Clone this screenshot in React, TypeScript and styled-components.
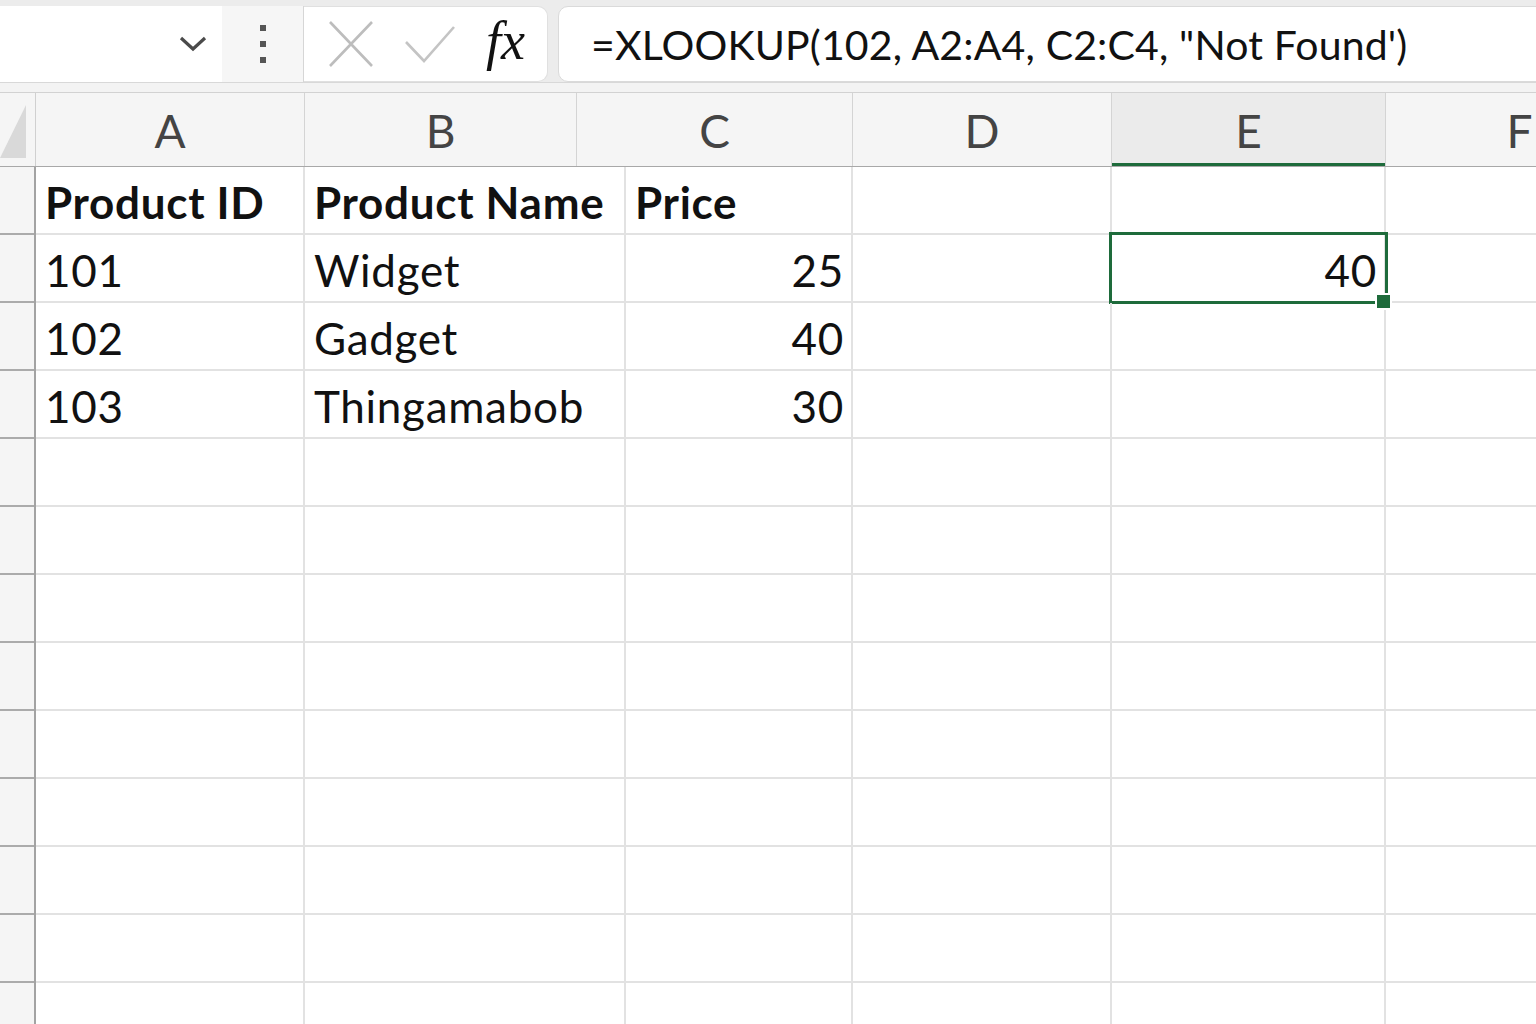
import styled, { createGlobalStyle } from 'styled-components';

const GlobalStyle = createGlobalStyle`
  html, body {
    margin: 0;
    padding: 0;
    background: #ffffff;
    overflow: hidden;
  }
  body {
    font-family: Lato, "Noto Sans", sans-serif;
  }
`;

const GREEN = '#1e6b3b';
const GRID = '#e2e2e2';

const Page = styled.div`
  width: 1536px;
  height: 1024px;
  overflow: hidden;
  display: flex;
  flex-direction: column;
  background: #fff;
`;

const Toolbar = styled.div`
  display: flex;
  flex-shrink: 0;
  height: 83px;
  padding-top: 6px;
  box-sizing: border-box;
  background: #ececec;
  border-bottom: 1px solid #d8d8d8;
`;

const NameBox = styled.div`
  width: 222px;
  background: #fff;
  display: flex;
  align-items: center;
  justify-content: flex-end;
  padding-right: 14px;
  box-sizing: border-box;
`;

const MoreButton = styled.div`
  width: 81px;
  background: #f6f6f6;
  border-right: 1px solid #d6d6d6;
  display: flex;
  align-items: center;
  justify-content: center;
`;

const FxGroup = styled.div`
  width: 244px;
  background: #fff;
  border: 1px solid #e0e0e0;
  border-left: none;
  border-radius: 0 10px 10px 0;
  display: flex;
  align-items: center;
  padding-left: 24px;
  gap: 30px;
  box-sizing: border-box;
`;

const FxLabel = styled.span`
  font-family: "Liberation Serif", serif;
  font-style: italic;
  font-size: 54px;
  color: #111;
  line-height: 1;
  padding-bottom: 6px;
`;

const FormulaBox = styled.div`
  flex: 1;
  margin-left: 10px;
  margin-right: -12px;
  background: #fff;
  border: 1px solid #dadada;
  border-radius: 10px;
  display: flex;
  align-items: center;
  padding-left: 32px;
  font-size: 41px;
  color: #111;
  letter-spacing: 0.15px;
  white-space: nowrap;
`;

const Band = styled.div`
  flex-shrink: 0;
  height: 9px;
  background: #f3f3f3;
  border-bottom: 1px solid #d2d2d2;
`;

const HeaderRow = styled.div`
  flex-shrink: 0;
  display: grid;
  grid-template-columns: 36px 269px 272px 276px 259px 274px 268px;
  height: 74px;
  background: #f5f5f5;
  border-bottom: 1px solid #a8a8a8;
  box-sizing: border-box;
`;

const Corner = styled.div`
  border-right: 1px solid #d0d0d0;
  display: flex;
  align-items: flex-end;
  padding-bottom: 8px;
`;

const ColHead = styled.div<{ $active?: boolean }>`
  display: flex;
  align-items: center;
  justify-content: center;
  font-size: 46px;
  font-weight: 400;
  color: #444;
  border-right: 1px solid #d4d4d4;
  background: ${(p) => (p.$active ? '#ebebeb' : 'transparent')};
  box-shadow: ${(p) => (p.$active ? `inset 0 -3px 0 ${GREEN}` : 'none')};
  padding-top: 2px;
`;

const Body = styled.div`
  display: flex;
  flex: 1;
  overflow: hidden;
`;

const RowHeads = styled.div`
  flex-shrink: 0;
  width: 36px;
  background: #f5f5f5;
  border-right: 2px solid #a3a3a3;
  box-sizing: border-box;
`;

const RowHead = styled.div`
  height: 68px;
  border-bottom: 2px solid #ababab;
  box-sizing: border-box;
`;

const CellGrid = styled.div`
  flex-shrink: 0;
  display: grid;
  grid-template-columns: 269px 321px 227px 259px 274px 268px;
  grid-auto-rows: 68px;
`;

const Cell = styled.div<{ $bold?: boolean; $num?: boolean; $selected?: boolean }>`
  position: relative;
  display: flex;
  align-items: center;
  justify-content: ${(p) => (p.$num ? 'flex-end' : 'flex-start')};
  padding: 4px ${(p) => (p.$num ? '7px' : '0')} 0 ${(p) => (p.$num ? '0' : '9px')};
  border-right: 2px solid ${GRID};
  border-bottom: 2px solid ${GRID};
  box-sizing: border-box;
  font-size: 44px;
  letter-spacing: 0.7px;
  font-weight: ${(p) => (p.$bold ? 700 : 400)};
  color: #111;
  white-space: nowrap;

  ${(p) =>
    p.$selected &&
    `
    &::after {
      content: '';
      position: absolute;
      top: -3px;
      left: -3px;
      right: -4px;
      bottom: -3px;
      border: 3px solid ${GREEN};
      pointer-events: none;
    }
  `}
`;

const FillHandle = styled.span`
  position: absolute;
  right: -8px;
  bottom: -9px;
  width: 13px;
  height: 13px;
  background: ${GREEN};
  border: 2px solid #fff;
  z-index: 2;
`;

const columns = ['A', 'B', 'C', 'D', 'E', 'F'];

type CellData = { text?: string; bold?: boolean; num?: boolean; selected?: boolean };

const rows: CellData[][] = [
  [
    { text: 'Product ID', bold: true },
    { text: 'Product Name', bold: true },
    { text: 'Price', bold: true },
    {},
    {},
    {},
  ],
  [{ text: '101' }, { text: 'Widget' }, { text: '25', num: true }, {}, { text: '40', num: true, selected: true }, {}],
  [{ text: '102' }, { text: 'Gadget' }, { text: '40', num: true }, {}, {}, {}],
  [{ text: '103' }, { text: 'Thingamabob' }, { text: '30', num: true }, {}, {}, {}],
];

const TOTAL_ROWS = 13;

const ChevronIcon = () => (
  <svg width="30" height="18" viewBox="0 0 30 18">
    <path d="M3 3 L15 14 L27 3" fill="none" stroke="#4a4a4a" strokeWidth="3.2" />
  </svg>
);

const DotsIcon = () => (
  <svg width="8" height="40" viewBox="0 0 8 40">
    <rect x="1" y="1" width="6" height="6" fill="#555" />
    <rect x="1" y="17" width="6" height="6" fill="#555" />
    <rect x="1" y="33" width="6" height="6" fill="#555" />
  </svg>
);

const CancelIcon = () => (
  <svg width="46" height="48" viewBox="0 0 46 48">
    <path d="M2 2 L44 46 M44 2 L2 46" fill="none" stroke="#bdbdbd" strokeWidth="2.6" />
  </svg>
);

const EnterIcon = () => (
  <svg width="52" height="40" viewBox="0 0 52 40">
    <path d="M2 18 L20 37 L50 3" fill="none" stroke="#c4c4c4" strokeWidth="2.6" />
  </svg>
);

const CornerTriangle = () => (
  <svg width="26" height="53" viewBox="0 0 26 53">
    <polygon points="26,0 26,53 0,53" fill="#d9d9d9" />
  </svg>
);

export default function App() {
  const allRows: CellData[][] = Array.from({ length: TOTAL_ROWS }, (_, i) =>
    rows[i] ? rows[i] : columns.map(() => ({}))
  );

  return (
    <>
      <GlobalStyle />
      <Page>
        <Toolbar>
          <NameBox>
            <ChevronIcon />
          </NameBox>
          <MoreButton>
            <DotsIcon />
          </MoreButton>
          <FxGroup>
            <CancelIcon />
            <EnterIcon />
            <FxLabel>fx</FxLabel>
          </FxGroup>
          <FormulaBox>=XLOOKUP(102, A2:A4, C2:C4, "Not Found')</FormulaBox>
        </Toolbar>
        <Band />
        <HeaderRow>
          <Corner>
            <CornerTriangle />
          </Corner>
          {columns.map((c) => (
            <ColHead key={c} $active={c === 'E'}>
              {c}
            </ColHead>
          ))}
        </HeaderRow>
        <Body>
          <RowHeads>
            {allRows.map((_, i) => (
              <RowHead key={i} />
            ))}
          </RowHeads>
          <CellGrid>
            {allRows.map((row, r) =>
              row.map((cell, c) => (
                <Cell
                  key={`${r}-${c}`}
                  $bold={cell.bold}
                  $num={cell.num}
                  $selected={cell.selected}
                >
                  {cell.text}
                  {cell.selected && <FillHandle />}
                </Cell>
              ))
            )}
          </CellGrid>
        </Body>
      </Page>
    </>
  );
}
